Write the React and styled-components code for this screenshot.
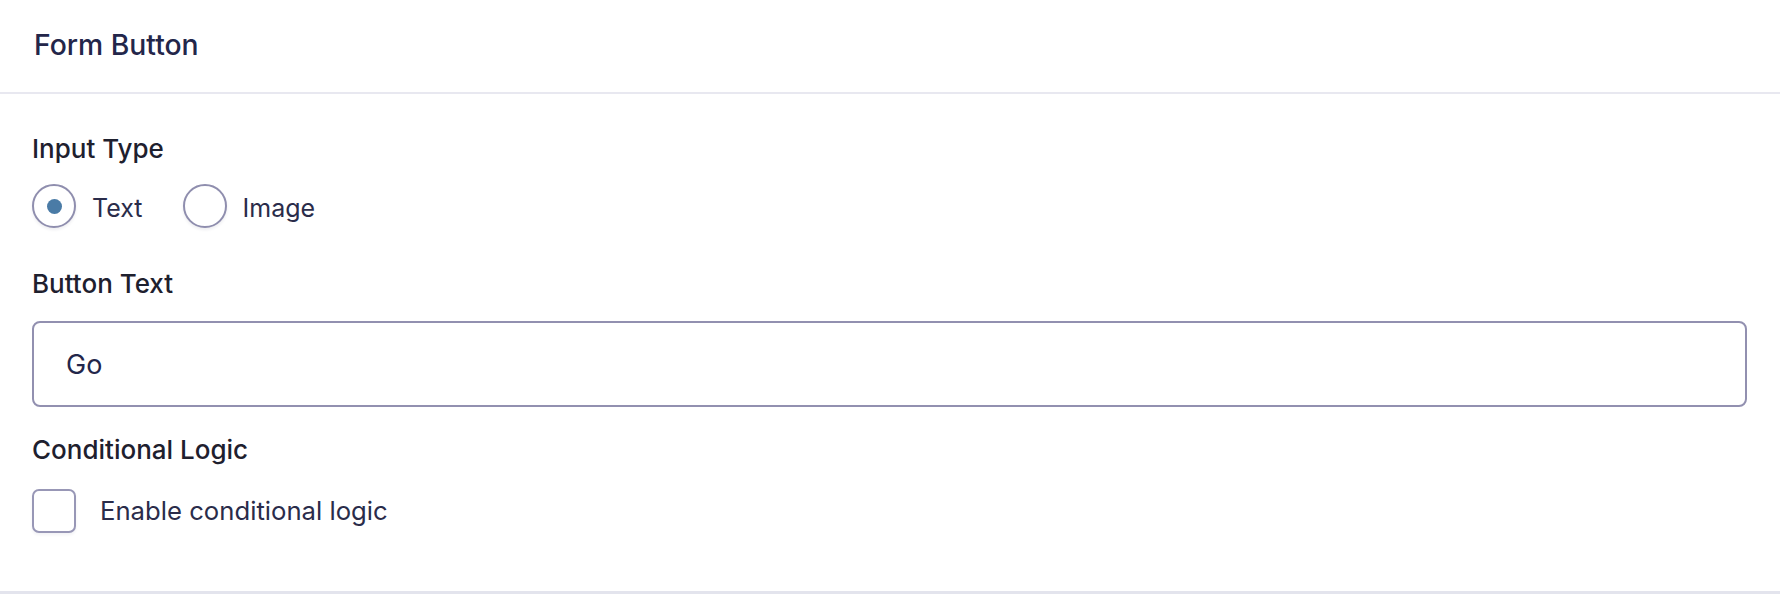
import React from "react";
import styled, { createGlobalStyle } from "styled-components";

const Global = createGlobalStyle`
  html, body { margin: 0; padding: 0; background: #ffffff; }
  body { font-family: Inter, "Noto Sans", "Liberation Sans", sans-serif; -webkit-font-smoothing: antialiased; }
  * { box-sizing: border-box; }
`;

const Card = styled.section`
  width: 100%;
  height: 594px;
  background: #fff;
  border-bottom: 3px solid #e3e4ed;
  display: flex;
  flex-direction: column;
`;

const Header = styled.header`
  height: 94px;
  display: flex;
  align-items: center;
  padding: 0 34px 2px;
  border-bottom: 2px solid #e8e8f0;
`;

const Title = styled.h2`
  margin: 0;
  font-size: 28.3px;
  font-weight: 500;
  color: #23264a;
  line-height: 1;
`;

const Body = styled.div`
  padding: 37px 33px 0 32px;
  display: flex;
  flex-direction: column;
`;

const Field = styled.div`
  display: flex;
  flex-direction: column;
  margin-bottom: ${(p) => p.$mb || 0}px;
`;

const Label = styled.div`
  font-size: 26px;
  font-weight: 500;
  line-height: 36px;
  color: #1e202e;
  margin-bottom: ${(p) => p.$mb || 0}px;
`;

const RadioRow = styled.div`
  display: flex;
  align-items: center;
  gap: 40px;
  height: 44px;
`;

const Option = styled.label`
  display: flex;
  align-items: center;
  gap: ${(p) => p.$gap || 16}px;
  font-size: ${(p) => p.$size || 25}px;
  line-height: 1;
  color: #2a2c4a;
  cursor: pointer;
  padding-top: ${(p) => p.$shift || 0}px;
`;

const RadioCircle = styled.span`
  width: 44px;
  height: 44px;
  border-radius: 50%;
  border: 2px solid #8f8eae;
  background: #fff;
  box-shadow: 0 2px 3px rgba(40, 40, 80, 0.08);
  display: flex;
  align-items: center;
  justify-content: center;
  margin-top: ${(p) => (p.$offset ? -p.$offset : 0)}px;
  &::after {
    content: "";
    width: 15px;
    height: 15px;
    border-radius: 50%;
    background: ${(p) => (p.$checked ? "#4a7ba6" : "transparent")};
  }
`;

const TextInput = styled.div`
  height: 86px;
  border: 2px solid #9290b0;
  border-radius: 8px;
  display: flex;
  align-items: center;
  padding-left: 32px;
  font-size: 27px;
  color: #23264a;
`;

const CheckBox = styled.span`
  width: 44px;
  height: 44px;
  border-radius: 7px;
  border: 2px solid #9897b6;
  background: #fff;
  box-shadow: 0 2px 3px rgba(40, 40, 80, 0.06);
`;

export default function App() {
  return (
    <>
      <Global />
      <Card>
        <Header>
          <Title>Form Button</Title>
        </Header>
        <Body>
          <Field $mb={38}>
            <Label $mb={17}>Input Type</Label>
            <RadioRow>
              <Option $shift={4}>
                <RadioCircle $checked $offset={4} />
                Text
              </Option>
              <Option $shift={4}>
                <RadioCircle $offset={4} />
                Image
              </Option>
            </RadioRow>
          </Field>
          <Field $mb={25}>
            <Label $mb={19}>Button Text</Label>
            <TextInput>Go</TextInput>
          </Field>
          <Field>
            <Label $mb={21}>Conditional Logic</Label>
            <Option $gap={24} $size={25.7}>
              <CheckBox />
              Enable conditional logic
            </Option>
          </Field>
        </Body>
      </Card>
    </>
  );
}
